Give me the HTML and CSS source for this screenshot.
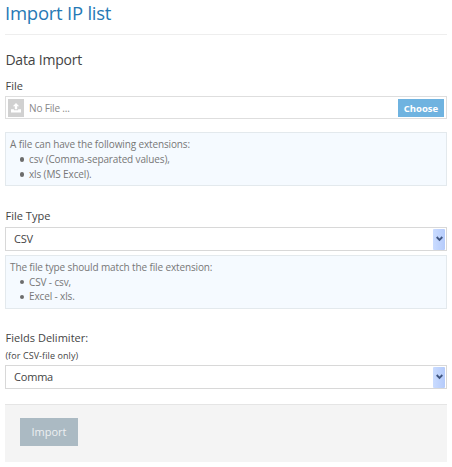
FILE: index.html
```html
<!DOCTYPE html>
<html lang="en">
<head>
<meta charset="utf-8">
<title>Import IP list</title>
<link rel="stylesheet" href="styles.css">
</head>
<body>
<main class="page">
  <h1 class="title">Import IP list</h1>
  <h2 class="subtitle">Data Import</h2>
  <div class="label label-file">File</div>
  <div class="file-input">
    <span class="file-icon">
      <svg width="10" height="10" viewBox="0 0 11 11"><path fill="#fff" d="M5.5 0 9 3.6H6.8V7H4.2V3.6H2zM0 7h3.2v1h4.6V7H11v3.5H0z"/></svg>
    </span>
    <span class="file-name">No File ...</span>
    <span class="choose">Choose</span>
  </div>
  <div class="info info-file">
    <p>A file can have the following extensions:</p>
    <ul>
      <li>csv (Comma-separated values),</li>
      <li>xls (MS Excel).</li>
    </ul>
  </div>
  <div class="label label-type">File Type</div>
  <div class="select">
    <span class="value">CSV</span>
    <span class="arrow"><svg width="7" height="6" viewBox="0 0 7 6"><path d="M.7 1 3.5 3.9 6.3 1" fill="none" stroke="#3f5580" stroke-width="1.8"/></svg></span>
  </div>
  <div class="info info-type">
    <p>The file type should match the file extension:</p>
    <ul>
      <li>CSV - csv,</li>
      <li>Excel - xls.</li>
    </ul>
  </div>
  <div class="label label-delimiter">Fields Delimiter:</div>
  <div class="note">(for CSV-file only)</div>
  <div class="select">
    <span class="value">Comma</span>
    <span class="arrow"><svg width="7" height="6" viewBox="0 0 7 6"><path d="M.7 1 3.5 3.9 6.3 1" fill="none" stroke="#3f5580" stroke-width="1.8"/></svg></span>
  </div>
  <div class="actions"><button class="import" type="button">Import</button></div>
</main>
</body>
</html>
```
FILE: styles.css
```css
* { box-sizing: border-box; }
body {
  margin: 0;
  background: #fff;
  color: #444;
  font-family: "Open Sans", "Noto Sans", sans-serif;
}
.page { width: 442px; margin-left: 5px; }
.title {
  height: 35px;
  margin: 0;
  border-bottom: 1px solid #eee;
  color: #2679b5;
  font-size: 18.5px;
  font-weight: 400;
  letter-spacing: -0.24px;
  line-height: 26px;
}
.subtitle {
  margin: 15px 0 0;
  padding-left: 0.4px;
  font-size: 14px;
  font-weight: 400;
  letter-spacing: -0.2px;
  line-height: 20px;
}
.label {
  padding-left: 0.5px;
  font-size: 11px;
  letter-spacing: 0.02px;
  line-height: 16px;
}
.label-file { margin-top: 8px; }
.file-input {
  display: flex;
  align-items: center;
  height: 23px;
  margin-top: 2px;
  padding: 0 2px;
  border: 1px solid #dedede;
}
.file-icon {
  display: flex;
  align-items: center;
  justify-content: center;
  width: 16px;
  height: 18px;
  background: #d1d1d1;
}
.file-name {
  flex: 1;
  padding-left: 5px;
  color: #888;
  font-size: 10px;
  letter-spacing: -0.15px;
}
.choose {
  width: 46px;
  height: 18px;
  background: #6fb3e0;
  color: #fff;
  font-size: 9.5px;
  font-weight: 700;
  line-height: 19px;
  text-align: center;
}
.info {
  height: 54px;
  padding: 4px;
  border: 1px solid #e3e9ed;
  background: #f5faff;
  color: #777;
  font-size: 10px;
  letter-spacing: -0.13px;
  line-height: 15px;
}
.info p, .info ul { margin: 0; }
.info ul { padding: 0 0 0 9.5px; list-style: none; }
.info li { display: flex; align-items: center; gap: 5px; }
.info li::before {
  content: "";
  width: 4.5px;
  height: 4.5px;
  border-radius: 50%;
  background: #6c6c6c;
}
.info-file { margin-top: 13px; }
.info-type { margin-top: 4px; line-height: 14.7px; }
.label-type { margin-top: 22px; }
.select {
  display: flex;
  align-items: center;
  justify-content: space-between;
  height: 24px;
  margin-top: 3px;
  padding: 0 1px 0 8px;
  border: 1px solid #d8d8d8;
  font-size: 11px;
}
.value { padding-bottom: 1px; letter-spacing: -0.2px; }
.arrow {
  display: flex;
  align-items: center;
  justify-content: center;
  width: 12px;
  height: 21px;
  border-radius: 1px;
  background: linear-gradient(90deg, #cadcff, #b5cbfb);
}
.label-delimiter { margin-top: 21px; }
.note {
  margin-top: 2px;
  padding-left: 0.4px;
  font-size: 9px;
  letter-spacing: 0.08px;
  line-height: 15px;
}
.actions {
  height: 58px;
  margin-top: 14px;
  padding: 13px 15px;
  border-top: 1px solid #e5e5e5;
  background: #f4f4f4;
}
.note + .select { margin-top: 2px; }
.select + .actions { margin-top: 15px; }
.import {
  display: block;
  width: 58px;
  height: 28px;
  padding: 0;
  border: 0;
  background: #abbac3;
  color: #edf0f2;
  font: 11px/28px "Open Sans", "Noto Sans", sans-serif;
}
```
